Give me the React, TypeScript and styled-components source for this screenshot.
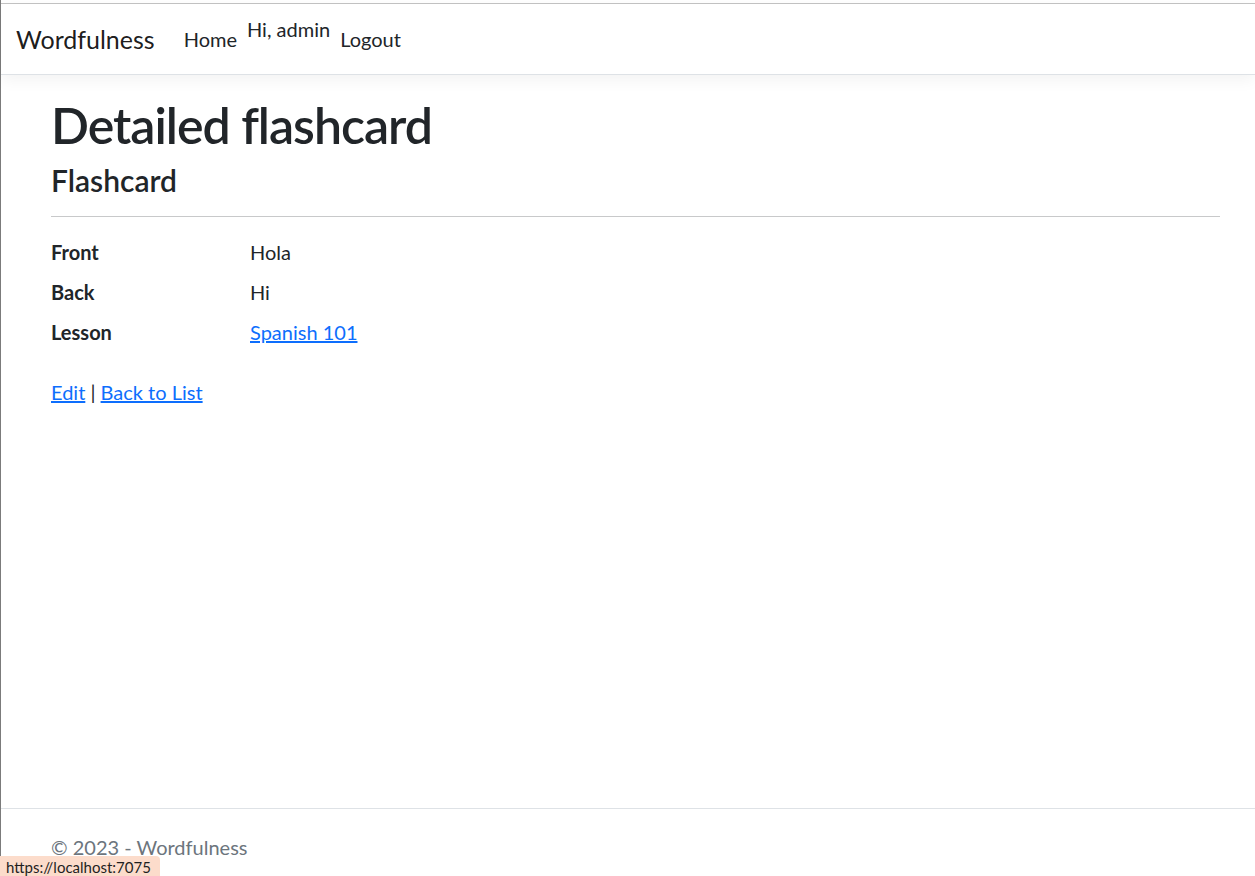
import React from 'react';
import styled, { createGlobalStyle } from 'styled-components';

const GlobalStyle = createGlobalStyle`
    html,
    body {
        margin: 0;
        padding: 0;
        height: 100%;
        overflow: hidden;
        background: #fff;
    }

    body {
        font-family: Lato, 'Open Sans', sans-serif;
        color: #212529;
    }

    * {
        box-sizing: border-box;
    }
`;

const Page = styled.div`
    height: 100vh;
    display: flex;
    flex-direction: column;
    border-left: 1px solid #7b7b7b;
`;

const BrowserEdge = styled.div`
    height: 4px;
    flex-shrink: 0;
    border-bottom: 1px solid #c4c4c4;
`;

const Navbar = styled.header`
    height: 71px;
    flex-shrink: 0;
    display: flex;
    align-items: center;
    padding: 0 15px;
    background: #fff;
    border-bottom: 1px solid #dee2e6;
    box-shadow: 0 5px 15px rgba(0, 0, 0, 0.05);
    position: relative;
    z-index: 1;
`;

const Brand = styled.a`
    font-size: 25px;
    line-height: 37px;
    color: rgba(0, 0, 0, 0.9);
    text-decoration: none;
    margin-right: 19px;
`;

const NavList = styled.nav`
    display: flex;
    height: 50px;
    align-items: flex-start;
`;

const NavLink = styled.a`
    display: block;
    padding: 10px;
    font-size: 20px;
    line-height: 30px;
    color: #212529;
    text-decoration: none;
`;

const Greeting = styled.span`
    font-size: 20px;
    line-height: 30px;
    color: #212529;
`;

const Main = styled.main`
    flex: 1;
    padding: 20px 35px 0 50px;
`;

const Title = styled.h1`
    margin: 0 0 7px;
    font-size: 50px;
    line-height: 60px;
    font-weight: 600;
    letter-spacing: -1px;
`;

const Subtitle = styled.h4`
    margin: 0;
    font-size: 30px;
    line-height: 36px;
    font-weight: 600;
`;

const Divider = styled.hr`
    margin: 18px 0 20px;
    border: 0;
    border-top: 1px solid #c8c9ca;
`;

const Details = styled.dl`
    display: grid;
    grid-template-columns: 199px 1fr;
    row-gap: 10px;
    margin: 0 0 30px;
    font-size: 20px;
    line-height: 30px;
`;

const Term = styled.dt`
    font-weight: 700;
`;

const Value = styled.dd`
    margin: 0;
`;

const Link = styled.a`
    color: #0d6efd;
    text-decoration: underline;
`;

const Actions = styled.div`
    font-size: 20px;
    line-height: 30px;
`;

const Footer = styled.footer`
    height: 68px;
    flex-shrink: 0;
    overflow: hidden;
    border-top: 1px solid #dee2e6;
    padding-left: 50px;
    font-size: 20px;
    line-height: 76px;
    color: #6c757d;
    white-space: nowrap;
`;

const StatusBar = styled.div`
    position: fixed;
    left: 0;
    bottom: 0;
    height: 20px;
    padding: 0 9px 0 6px;
    background: #fcdccb;
    border-top-right-radius: 4px;
    font-size: 15px;
    line-height: 22px;
    color: #1f1f1f;
`;

const rows = [
    { term: 'Front', value: 'Hola' },
    { term: 'Back', value: 'Hi' },
    { term: 'Lesson', value: 'Spanish 101', href: '#lesson' }
];

const App: React.FC = () => (
    <>
        <GlobalStyle />
        <Page>
            <BrowserEdge />
            <Navbar>
                <Brand href="#">Wordfulness</Brand>
                <NavList>
                    <NavLink href="#">Home</NavLink>
                    <Greeting>Hi, admin</Greeting>
                    <NavLink href="#">Logout</NavLink>
                </NavList>
            </Navbar>
            <Main>
                <Title>Detailed flashcard</Title>
                <Subtitle>Flashcard</Subtitle>
                <Divider />
                <Details>
                    {rows.map(row => (
                        <React.Fragment key={row.term}>
                            <Term>{row.term}</Term>
                            <Value>
                                {row.href ? (
                                    <Link href={row.href}>{row.value}</Link>
                                ) : (
                                    row.value
                                )}
                            </Value>
                        </React.Fragment>
                    ))}
                </Details>
                <Actions>
                    <Link href="#edit">Edit</Link> |{' '}
                    <Link href="#list">Back to List</Link>
                </Actions>
            </Main>
            <Footer>&copy; 2023 - Wordfulness</Footer>
        </Page>
        <StatusBar>https://localhost:7075</StatusBar>
    </>
);

export default App;
